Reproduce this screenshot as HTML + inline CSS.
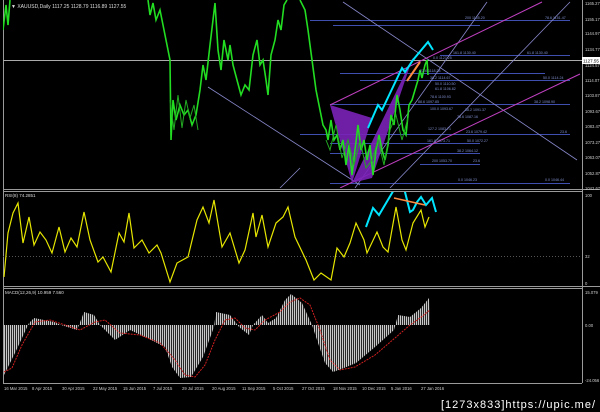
<!DOCTYPE html>
<html><head><style>
html,body{margin:0;padding:0;background:#000;width:600px;height:412px;overflow:hidden}
svg{display:block}
text{font-family:"Liberation Sans",sans-serif}
</style></head><body>
<svg width="600" height="412" viewBox="0 0 600 412" xmlns="http://www.w3.org/2000/svg">
<defs>
<pattern id="st" width="2" height="4" patternUnits="userSpaceOnUse"><rect width="1.2" height="4" fill="#c8c8c8"/></pattern>
<clipPath id="cm"><rect x="3" y="0" width="579" height="188"/></clipPath>
<clipPath id="cr"><rect x="3" y="192" width="579" height="94"/></clipPath>
</defs>
<rect width="600" height="412" fill="#000"/>
<g stroke="#9a9a9a" fill="none" stroke-width="1">
<line x1="3.5" y1="0" x2="3.5" y2="383"/>
<line x1="582.5" y1="0" x2="582.5" y2="383"/>
<line x1="3" y1="189.5" x2="600" y2="189.5"/>
<line x1="3" y1="191.5" x2="582" y2="191.5"/>
<line x1="3" y1="286.5" x2="600" y2="286.5"/>
<line x1="3" y1="288.5" x2="582" y2="288.5"/>
<line x1="3" y1="383.5" x2="582" y2="383.5"/>
</g>
<g clip-path="url(#cm)">
<line x1="3" y1="60.5" x2="582" y2="60.5" stroke="#aaa" stroke-width="1"/>
<g stroke="#3f4fb0" stroke-width="1">
<line x1="310" y1="20.5" x2="570" y2="20.5"/>
<line x1="333" y1="25.5" x2="480" y2="25.5"/>
<line x1="440" y1="55.5" x2="570" y2="55.5"/>
<line x1="340" y1="73.5" x2="545" y2="73.5"/>
<line x1="360" y1="80.5" x2="570" y2="80.5"/>
<line x1="330" y1="104.5" x2="570" y2="104.5"/>
<line x1="300" y1="134.5" x2="570" y2="134.5"/>
<line x1="330" y1="143.5" x2="480" y2="143.5"/>
<line x1="330" y1="153.5" x2="480" y2="153.5"/>
<line x1="420" y1="164.5" x2="480" y2="164.5"/>
<line x1="330" y1="183.5" x2="570" y2="183.5"/>
</g>
<g stroke="#8888cc" stroke-width="0.8" fill="none">
<line x1="208" y1="87" x2="360" y2="185"/>
<line x1="280" y1="188" x2="300" y2="168"/>
<line x1="343" y1="2" x2="577" y2="160"/>
<line x1="355" y1="188" x2="487" y2="2"/>
<line x1="390" y1="188" x2="570" y2="2"/>
</g>
<g stroke="#c040c0" stroke-width="1" fill="none">
<line x1="330" y1="105" x2="542" y2="2"/>
<line x1="340" y1="188" x2="580" y2="74"/>
</g>
<polygon points="330,105 372,118 352,183" fill="#7a22b8" opacity="0.9"/>
<polygon points="352,183 413,57 372,178" fill="#7a22b8" opacity="0.9"/>
<g fill="none" stroke="#22dd22" stroke-width="1.6">
<polyline points="3,30 6,5 8,25 10,0"/>
<polyline points="148,0 150,15 153,3 156,20 160,10 164,30 168,50 170,60 171,140 173,100 176,120 180,105 184,115 188,110 192,125 196,115 200,90 203,65 206,80 210,45 213,20 215,3 218,50 221,70 224,40 228,60 230,45 233,65 237,80 241,95 245,85 249,90 253,55 257,40 260,65 263,60 266,80 268,95 271,55 275,40 278,20 281,30 284,5 287,0"/>
<polyline points="300,0 305,10 308,30 312,60 316,90 320,110 323,125 326,130 328,140 331,120 334,140 337,135 340,150 343,140 346,165 349,145 352,175 355,150 358,125 361,150 364,140 367,160 370,145 373,175 376,150 379,135 382,150 385,160 388,145 391,115 394,125 397,95 400,110 403,130 406,135 409,105 412,100 415,90 418,80 420,70 422,78 425,65 427,60 428,75"/>
</g>
<g fill="none" stroke="#22aa22" stroke-width="1">
<polyline points="170,100 174,130 178,95 182,128 186,100 190,118 194,105 198,130"/>
<polyline points="326,140 330,150 336,125 342,158 348,140 354,165 360,140 366,168 372,160 378,140 384,165 390,130 396,115 402,140 408,118"/>
</g>
<polyline fill="none" stroke="#00e5ff" stroke-width="2" points="368,128 378,105 382,110 402,68 405,72 413,60 428,42 433,50"/>
<line x1="407" y1="81" x2="420" y2="62" stroke="#ff8c40" stroke-width="2"/>
</g>
<text x="11" y="8" font-size="5" fill="#ddd">▼ XAUUSD,Daily  1117.25 1128.79 1116.89 1127.55</text>
<g font-size="3.6" fill="#8090d0">
<text x="465" y="19">200 1155.20</text><text x="545" y="19">78.6 1151.47</text>
<text x="453" y="54">161.8 1130.40</text><text x="527" y="54">61.8 1130.40</text>
<text x="433" y="59">0.0 1127.25</text>
<text x="420" y="72">23.6 1118.28</text>
<text x="430" y="79">38.2 1114.67</text><text x="543" y="79">50.0 1114.24</text>
<text x="435" y="85">50.0 1110.50</text><text x="435" y="90">61.8 1106.82</text>
<text x="430" y="98">78.6 1100.93</text><text x="418" y="103">88.6 1097.85</text><text x="534" y="103">38.2 1098.90</text>
<text x="430" y="110">100.0 1093.67</text><text x="465" y="111">38.2 1091.37</text>
<text x="457" y="118">78.6 1087.16</text>
<text x="428" y="130">127.2 1083.71</text><text x="466" y="133">23.6 1079.42</text><text x="560" y="133">23.6</text>
<text x="427" y="142">161.8 1073.71</text><text x="467" y="142">50.0 1072.27</text>
<text x="457" y="152">38.2 1064.12</text>
<text x="432" y="162">200 1053.70</text><text x="473" y="162">23.6</text>
<text x="458" y="181">0.0 1046.23</text><text x="545" y="181">0.0 1046.44</text>
</g>
<g font-size="4.2" fill="#ccc">
<text x="585" y="5">1165.27</text><text x="585" y="21">1155.17</text><text x="585" y="35">1144.97</text>
<text x="585" y="51">1134.77</text><text x="585" y="67">1124.57</text><text x="585" y="82">1114.07</text>
<text x="585" y="97">1103.87</text><text x="585" y="113">1093.67</text><text x="585" y="128">1083.47</text>
<text x="585" y="144">1073.27</text><text x="585" y="159">1063.07</text><text x="585" y="175">1052.87</text>
<text x="585" y="190">1042.67</text>
<text x="585" y="197">100</text><text x="585" y="258">32</text><text x="585" y="285">0</text>
<text x="585" y="294">15.079</text><text x="585" y="327">0.00</text><text x="585" y="382">-24.056</text>
</g>
<rect x="582" y="57" width="18" height="7" fill="#fff"/>
<text x="583" y="62.5" font-size="4.5" fill="#000">1127.55</text>
<text x="5" y="197" font-size="4.5" fill="#ddd">RSI(8) 74.2851</text>
<line x1="3" y1="256.5" x2="582" y2="256.5" stroke="#555" stroke-dasharray="1,2"/>
<g clip-path="url(#cr)">
<polyline fill="none" stroke="#e6e600" stroke-width="1.2" points="4,277 8,233 13,213 18,203 23,243 29,217 34,245 40,232 46,240 52,253 59,227 65,252 71,238 77,247 84,212 90,240 98,262 103,257 111,272 119,233 124,242 129,213 134,248 142,240 149,253 157,245 161,253 170,282 177,263 188,257 197,220 203,207 209,223 214,200 222,247 230,233 239,263 245,250 253,213 256,237 262,215 268,247 276,223 283,217 288,207 295,237 306,260 314,280 321,273 331,280 337,248 344,257 350,243 356,223 364,240 367,253 377,232 383,247 388,252 396,207 402,240 406,250 413,223 421,210 425,227 429,217"/>
<polyline fill="none" stroke="#00e5ff" stroke-width="2" points="366,227 373,208 379,215 395,188 404,188 410,212 413,210 417,202 421,197 426,205 432,198 436,212"/>
<line x1="394" y1="198" x2="425" y2="205" stroke="#ff8c40" stroke-width="1.5"/>
</g>
<text x="5" y="294" font-size="4.5" fill="#ddd">MACD(12,26,9) 10.959 7.560</text>
<path fill="url(#st)" d="M4,325 L4,375 15,353 29,323 34,318 54,322 61,325 77,330 84,312 94,315 100,325 115,340 130,330 145,337 165,347 172,367 180,378 191,377 203,357 214,327 216,312 230,315 239,327 249,335 253,325 262,315 268,323 276,318 285,300 291,294 302,303 312,325 318,343 325,363 333,372 344,368 356,363 375,347 394,330 398,315 410,317 421,308 429,298 430,325 Z"/>
<polyline fill="none" stroke="#d02020" stroke-width="1" stroke-dasharray="2,1" points="4,372 12,368 22,345 35,322 50,320 65,325 80,330 95,322 105,320 120,333 140,335 160,343 175,360 185,375 195,377 205,365 215,340 225,320 235,318 245,328 255,330 265,320 280,312 290,302 300,298 310,305 320,330 330,360 340,370 355,367 375,355 395,338 410,325 420,318 430,310"/>
<g font-size="4.2" fill="#ccc">
<text x="4" y="390">16 Mar 2015</text><text x="32" y="390">8 Apr 2015</text><text x="62" y="390">30 Apr 2015</text>
<text x="93" y="390">22 May 2015</text><text x="123" y="390">15 Jun 2015</text><text x="153" y="390">7 Jul 2015</text>
<text x="182" y="390">29 Jul 2015</text><text x="212" y="390">20 Aug 2015</text><text x="242" y="390">11 Sep 2015</text>
<text x="273" y="390">5 Oct 2015</text><text x="302" y="390">27 Oct 2015</text><text x="333" y="390">18 Nov 2015</text>
<text x="362" y="390">10 Dec 2015</text><text x="391" y="390">5 Jan 2016</text><text x="421" y="390">27 Jan 2016</text>
</g>
<text x="441" y="408" font-size="11" fill="#fff" font-family="Liberation Mono,monospace" textLength="154">[1273x833]https://upic.me/</text>
</svg>
</body></html>
